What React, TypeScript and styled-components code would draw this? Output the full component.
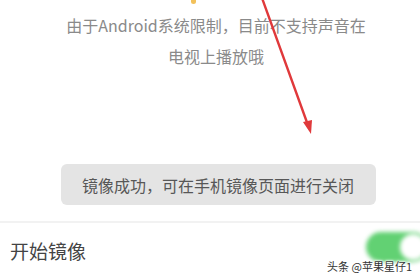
import React from 'react';
import styled, { createGlobalStyle } from 'styled-components';

const GlobalStyle = createGlobalStyle`
  html, body {
    margin: 0;
    padding: 0;
    background: #ffffff;
  }
  body {
    font-family: "Noto Sans CJK SC", "Noto Sans", sans-serif;
  }
`;

const Screen = styled.div`
  position: relative;
  width: 420px;
  height: 280px;
  overflow: hidden;
  background: #ffffff;
  display: flex;
  flex-direction: column;
`;

const Notice = styled.p`
  margin: 10px 0 0;
  padding-left: 12px;
  text-align: center;
  font-size: 16px;
  line-height: 31px;
  color: #8a8a8a;
`;

const ToastWrap = styled.div`
  display: flex;
  justify-content: center;
  margin-top: 92px;
  padding-left: 16px;
`;

const Toast = styled.div`
  width: 315px;
  height: 41px;
  display: flex;
  align-items: center;
  justify-content: center;
  background: #e4e4e4;
  border-radius: 6px;
  font-size: 16px;
  color: #575757;
`;

const Divider = styled.div`
  margin-top: 16px;
  height: 2px;
  background: #f2f2f2;
`;

const Row = styled.div`
  display: flex;
  align-items: center;
  justify-content: space-between;
  height: 54px;
  padding-left: 10px;
`;

const Label = styled.span`
  font-size: 19px;
  color: #444444;
`;

const Toggle = styled.div`
  position: relative;
  width: 62px;
  height: 30px;
  margin-right: -8px;
  margin-top: -6px;
  border-radius: 15px;
  background: #62d173;
  filter: blur(2px);
`;

const Knob = styled.div`
  position: absolute;
  top: 2px;
  right: 2px;
  width: 26px;
  height: 26px;
  border-radius: 50%;
  background: #ffffff;
`;

const Arrow = styled.svg`
  position: absolute;
  left: 0;
  top: 0;
  pointer-events: none;
`;

const Dot = styled.div`
  position: absolute;
  left: 191px;
  top: 0;
  width: 5px;
  height: 4px;
  border-radius: 0 0 3px 3px;
  background: #f2c15a;
  filter: blur(0.6px);
`;

const Watermark = styled.span`
  position: absolute;
  right: 8px;
  bottom: 6px;
  font-size: 11px;
  color: #333333;
  text-shadow: 0 0 2px #ffffff, 0 0 2px #ffffff, 0 0 3px #ffffff;
`;

const App: React.FC = () => (
  <>
    <GlobalStyle />
    <Screen>
      <Notice>
        由于Android系统限制，目前不支持声音在
        <br />
        电视上播放哦
      </Notice>
      <ToastWrap>
        <Toast>镜像成功，可在手机镜像页面进行关闭</Toast>
      </ToastWrap>
      <Divider />
      <Row>
        <Label>开始镜像</Label>
        <Toggle>
          <Knob />
        </Toggle>
      </Row>
      <Dot />
      <Arrow width="420" height="280" viewBox="0 0 420 280">
        <line x1="262" y1="-2" x2="309" y2="128" stroke="#e0393b" strokeWidth="2.4" strokeLinecap="round" />
        <path d="M303 122 L311 134 L312 120 Z" fill="#e0393b" />
      </Arrow>
      <Watermark>头条 @苹果星仔1</Watermark>
    </Screen>
  </>
);

export default App;
